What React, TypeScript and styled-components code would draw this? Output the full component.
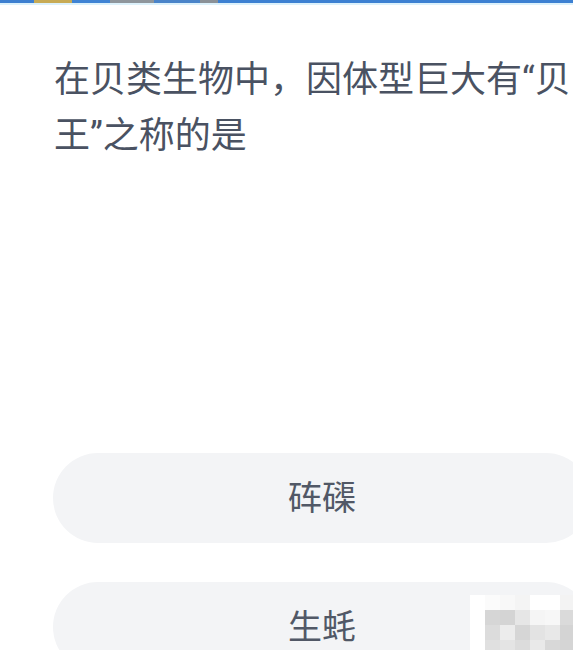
import React from "react";
import styled, { createGlobalStyle } from "styled-components";

const Global = createGlobalStyle`
  html, body {
    margin: 0;
    padding: 0;
    background: #ffffff;
    overflow: hidden;
  }
  body {
    width: 573px;
    height: 650px;
  }
`;

const Page = styled.div`
  position: relative;
  width: 573px;
  height: 650px;
  overflow: hidden;
  background: #ffffff;
  display: flex;
  flex-direction: column;
`;

const TopStrip = styled.div`
  flex: none;
  display: flex;
  height: 3px;
  background: #3c80d2;
  border-bottom: 2px solid #dcf1fb;
`;

const Segment = styled.div<{ $w: number; $c: string }>`
  width: ${(p) => p.$w}px;
  background: ${(p) => p.$c};
  flex: none;
`;

const Content = styled.div`
  flex: none;
  width: 620px;
  padding-left: 54px;
  display: flex;
  flex-direction: column;
`;

const Question = styled.p`
  margin: 47px 0 0;
  font-family: "Roboto", "Noto Sans CJK SC", sans-serif;
  font-size: 36px;
  line-height: 56px;
  color: #4a5262;
  width: 530px;
`;

const Options = styled.div`
  display: flex;
  flex-direction: column;
  gap: 39px;
  margin-top: 289px;
  margin-left: -1px;
`;

const Option = styled.div`
  width: 538px;
  height: 90px;
  border-radius: 45px;
  background: #f3f4f6;
  display: flex;
  align-items: center;
  justify-content: center;
  padding-bottom: 6px;
  box-sizing: border-box;
  font-family: "Noto Sans CJK SC", sans-serif;
  font-size: 34px;
  color: #515866;
  flex: none;
`;

const Mosaic = styled.div`
  position: absolute;
  left: 470px;
  top: 595px;
  display: grid;
  grid-template-columns: repeat(7, 15px);
  grid-auto-rows: 15px;
`;

const Tile = styled.div<{ $c: string }>`
  background: ${(p) => p.$c};
`;

const segments: [number, string][] = [
  [34, "#3d7fd0"],
  [38, "#c7aa55"],
  [38, "#3f83d4"],
  [44, "#8f969c"],
  [46, "#4a84c9"],
  [18, "#8b9197"],
  [355, "#3c80d2"],
];

const tiles = [
  "#ffffff", "#fbfbfb", "#f8f8f8", "#f4f4f4", "#ffffff", "#ffffff", "#f3f3f3",
  "#ffffff", "#d6d6d6", "#d4d4d4", "#e6e6e6", "#f5f5f5", "#f7f7f7", "#dadada",
  "#ffffff", "#dcdcdc", "#ececec", "#d6d6d6", "#e3e3e3", "#e8e8e8", "#d4d4d4",
  "#ffffff", "#e0e0e0", "#e4e4e4", "#dcdcdc", "#e9e9e9", "#d8d8d8", "#d5d5d5",
];

export default function App() {
  return (
    <>
      <Global />
      <Page>
        <TopStrip>
          {segments.map(([w, c], i) => (
            <Segment key={i} $w={w} $c={c} />
          ))}
        </TopStrip>
        <Content>
          <Question>在贝类生物中，因体型巨大有“贝王”之称的是</Question>
          <Options>
            <Option>砗磲</Option>
            <Option>生蚝</Option>
          </Options>
        </Content>
        <Mosaic>
          {tiles.map((c, i) => (
            <Tile key={i} $c={c} />
          ))}
        </Mosaic>
      </Page>
    </>
  );
}
